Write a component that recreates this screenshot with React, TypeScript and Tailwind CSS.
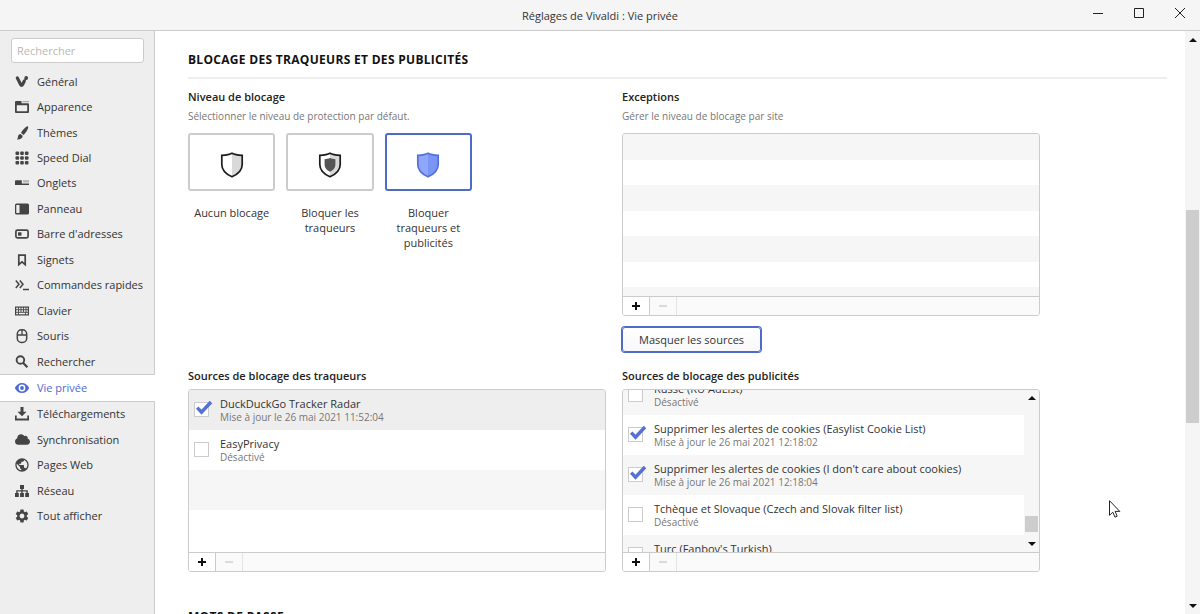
import { useState, type ReactNode } from "react";
import clsx from "clsx";
import { FaCloud } from "react-icons/fa";
import { MdPublic, MdSettings } from "react-icons/md";

function Icon({ children }: { children: ReactNode }) {
  return (
    <svg width="16" height="16" viewBox="0 0 16 16" fill="currentColor" aria-hidden="true">
      {children}
    </svg>
  );
}

const navItems: { label: string; icon: ReactNode }[] = [
  {
    label: "Général",
    icon: (
      <Icon>
        <path d="M3.300 3.900 6.500 10.200Q7.600 12.400 8.700 10.200L10.200 7.200" fill="none" stroke="currentColor" strokeWidth="3.200" strokeLinecap="round" />
        <circle cx="12.200" cy="4" r="1.900" />
        <path d="m10.200 7.600 2-4" stroke="currentColor" strokeWidth="1.600" />
      </Icon>
    ),
  },
  {
    label: "Apparence",
    icon: (
      <Icon>
        <path d="M1 3a1 1 0 0 1 1-1h5.500v2.200H14a1 1 0 0 1 1 1V13a1 1 0 0 1-1 1H2a1 1 0 0 1-1-1zm1.800 3.300v6h10.400v-6z" fillRule="evenodd" />
        <path d="M8.500 2H15v1.200H8.500z" opacity=".4" />
      </Icon>
    ),
  },
  {
    label: "Thèmes",
    icon: (
      <Icon>
        <path d="M14 1.500c.8.9-.3 2.900-1.400 4.700-.9 1.500-2 2.900-3 3.800L7 8c.6-1.300 1.800-2.900 3.100-4.200C11.600 2.200 13.300.9 14 1.500z" />
        <path d="M6.300 8.900 8.700 10.800c0 2.300-2.200 3.900-5.900 3.700 1.300-.9.8-2.100 1.300-3.500.4-1.200 1.100-1.900 2.200-2.100z" />
      </Icon>
    ),
  },
  {
    label: "Speed Dial",
    icon: (
      <Icon>
        {[3.3, 8, 12.7].map((y) =>
          [3.3, 8, 12.7].map((x) => (
            <rect key={`${x}-${y}`} x={x - 1.8} y={y - 1.8} width="3.6" height="3.6" rx="1" />
          ))
        )}
      </Icon>
    ),
  },
  {
    label: "Onglets",
    icon: (
      <Icon>
        <path d="M1 6a.8.8 0 0 1 .8-.8h6V8.600H15V10H1z" />
        <path d="M9 5.200h6v2.200H9z" opacity=".35" />
      </Icon>
    ),
  },
  {
    label: "Panneau",
    icon: (
      <Icon>
        <path d="M2.500 2.500h11A1.500 1.500 0 0 1 15 4v8a1.500 1.500 0 0 1-1.500 1.500h-11A1.500 1.500 0 0 1 1 12V4a1.500 1.500 0 0 1 1.500-1.500zM2.300 3.900v8.200h3.200V3.900z" fillRule="evenodd" />
      </Icon>
    ),
  },
  {
    label: "Barre d'adresses",
    icon: (
      <Icon>
        <rect x="1.900" y="4.200" width="12.200" height="7.600" rx="1.500" fill="none" stroke="currentColor" strokeWidth="1.700" />
        <path d="M4 6.300h3.500v3.400H4z" />
      </Icon>
    ),
  },
  {
    label: "Signets",
    icon: (
      <Icon>
        <path d="M4.800 3.200h6.400v9.500L8 9.800l-3.200 2.900z" fill="none" stroke="currentColor" strokeWidth="1.700" />
      </Icon>
    ),
  },
  {
    label: "Commandes rapides",
    icon: (
      <Icon>
        <path d="M1.800 3.500 5 7.200 1.800 11M5.800 3.500 9 7.200 5.800 11M9 12.600h6" fill="none" stroke="currentColor" strokeWidth="1.500" />
      </Icon>
    ),
  },
  {
    label: "Clavier",
    icon: (
      <Icon>
        <rect x="1.600" y="4.100" width="12.800" height="7.800" fill="none" stroke="currentColor" strokeWidth="1.200" />
        <path d="M1.500 6.700h13M1.500 9.300h13M4.500 4v5.300M7 4v5.300M9.500 4v5.300M12 4v5.300M4.500 9.300V12M11.500 9.300V12" stroke="currentColor" strokeWidth=".9" />
      </Icon>
    ),
  },
  {
    label: "Souris",
    icon: (
      <Icon>
        <rect x="3.300" y="1.700" width="9.400" height="12.800" rx="4.300" fill="none" stroke="currentColor" strokeWidth="1.500" />
        <path d="M3.300 7h9.400M8 2v5" stroke="currentColor" strokeWidth="1.300" />
      </Icon>
    ),
  },
  {
    label: "Rechercher",
    icon: (
      <Icon>
        <circle cx="6.400" cy="6" r="3.800" fill="none" stroke="currentColor" strokeWidth="1.900" />
        <path d="m9 8.800 4.400 4.400" stroke="currentColor" strokeWidth="2.200" />
      </Icon>
    ),
  },
  {
    label: "Vie privée",
    icon: (
      <Icon>
        <path d="M8 3C4.800 3 2.200 5 .8 8c1.400 3 4 5 7.200 5s5.800-2 7.200-5C13.800 5 11.200 3 8 3zm0 1.600a3.400 3.400 0 1 1 0 6.800 3.400 3.400 0 0 1 0-6.800z" fillRule="evenodd" />
        <circle cx="8" cy="8" r="1.900" />
      </Icon>
    ),
  },
  {
    label: "Téléchargements",
    icon: (
      <Icon>
        <path d="M6.500 1h3v4.800h3L8 10.300 3.500 5.800h3z" />
        <path d="M1 9.500h1.700v3h10.600v-3H15v5H1z" />
      </Icon>
    ),
  },
  { label: "Synchronisation", icon: <FaCloud size={15} /> },
  { label: "Pages Web", icon: <MdPublic size={16} /> },
  {
    label: "Réseau",
    icon: (
      <Icon>
        <path d="M6 2h4v4H6zM1 10h3.800v4H1zM6.100 10h3.800v4H6.100zM11.200 10H15v4h-3.800z" />
        <path d="M8 5v6M2.900 11V7.900h10.200V11" fill="none" stroke="currentColor" strokeWidth="1.400" />
      </Icon>
    ),
  },
  { label: "Tout afficher", icon: <MdSettings size={16} /> },
];

const shieldPath = "M12 1.200C9 2.800 5.500 3.100 1.800 3.400v9.100c0 6 4.600 9.800 10.200 12.300 5.600-2.500 10.200-6.300 10.200-12.300V3.400C18.500 3.100 15 2.800 12 1.200z";
const shieldHalf = "M12 1.200C15 2.800 18.500 3.100 22.200 3.400v9.100c0 6-4.600 9.800-10.200 12.300z";

function Shield({ variant }: { variant: "none" | "trackers" | "all" }) {
  const blue = variant === "all";
  return (
    <svg width="24" height="26" viewBox="0 0 24 26" aria-hidden="true">
      <path d={shieldPath} fill={blue ? "#8ea6fb" : "#ffffff"} />
      <path d={shieldHalf} fill={blue ? "#7b95f6" : "#d9d9d9"} />
      {variant === "trackers" && (
        <path d="M12 6c-1.600.8-3.400 1-5.400 1.200v5.600c0 3.300 2.300 5.400 5.400 6.900 3.100-1.500 5.400-3.600 5.400-6.900V7.200C15.400 7 13.600 6.800 12 6z" fill="#555555" />
      )}
      <path d={shieldPath} fill="none" stroke={blue ? "#5470d8" : "#1c1c1c"} strokeWidth="1.700" />
    </svg>
  );
}

const levels = [
  { id: "none", label: "Aucun blocage" },
  { id: "trackers", label: "Bloquer les traqueurs" },
  { id: "all", label: "Bloquer traqueurs et publicités" },
] as const;

type Source = { name: string; status: string; enabled: boolean; selected?: boolean };

const trackerSources: Source[] = [
  { name: "DuckDuckGo Tracker Radar", status: "Mise à jour le 26 mai 2021 11:52:04", enabled: true, selected: true },
  { name: "EasyPrivacy", status: "Désactivé", enabled: false },
];

const adSources: Source[] = [
  { name: "Russe (RU AdList)", status: "Désactivé", enabled: false },
  { name: "Supprimer les alertes de cookies (Easylist Cookie List)", status: "Mise à jour le 26 mai 2021 12:18:02", enabled: true },
  { name: "Supprimer les alertes de cookies (I don't care about cookies)", status: "Mise à jour le 26 mai 2021 12:18:04", enabled: true },
  { name: "Tchèque et Slovaque (Czech and Slovak filter list)", status: "Désactivé", enabled: false },
  { name: "Turc (Fanboy's Turkish)", status: "Désactivé", enabled: false },
];

function SourceRow({ source }: { source: Source }) {
  const [checked, setChecked] = useState(source.enabled);
  return (
    <label className={clsx("flex h-10 shrink-0 items-start gap-[11px] pl-[5px]", source.selected ? "bg-[#eeeeee]" : "odd:bg-[#f6f6f6]")}>
      <span className="relative mt-3 size-[15px] shrink-0">
        <input
          type="checkbox"
          checked={checked}
          onChange={(e) => setChecked(e.target.checked)}
          className="block size-[15px] appearance-none border border-[#cccccc] bg-white"
        />
        {checked && (
          <svg className="pointer-events-none absolute -top-1 left-0 h-[18px] w-5" viewBox="0 0 20 18" aria-hidden="true">
            <path d="m3.200 9.600 4.300 4.600L17 4" fill="none" stroke="#5571d6" strokeWidth="3.400" />
          </svg>
        )}
      </span>
      <span className="flex flex-col pt-[7px]">
        <span className="text-[11px] leading-[14px] text-[#333333]">{source.name}</span>
        <span className="text-[10px] leading-3 text-[#777777]">{source.status}</span>
      </span>
    </label>
  );
}

function ListBox({ children }: { children: ReactNode }) {
  return (
    <div className="overflow-hidden rounded-[3px] border border-[#cccccc]">
      <div className="flex h-[162px] overflow-hidden">{children}</div>
      <div className="flex h-[19px] border-t border-[#cccccc] bg-[#fafafa]">
        <button type="button" aria-label="Ajouter" className="flex w-[27px] items-center justify-center border-r border-[#cccccc] bg-white">
          <svg width="8" height="8" viewBox="0 0 8 8" aria-hidden="true">
            <path d="M4 0v8M0 4h8" stroke="#111111" strokeWidth="2" />
          </svg>
        </button>
        <button type="button" aria-label="Supprimer" disabled className="flex w-[27px] items-center justify-center border-r border-[#e4e4e4]">
          <svg width="8" height="8" viewBox="0 0 8 8" aria-hidden="true">
            <path d="M0 4h8" stroke="#bbbbbb" strokeWidth="1" />
          </svg>
        </button>
      </div>
    </div>
  );
}

function Arrow({ down = false }: { down?: boolean }) {
  return (
    <svg width="8" height="4" viewBox="0 0 8 4" aria-hidden="true">
      <path d={down ? "M0 0h8L4 4z" : "M0 4h8L4 0z"} fill="#111111" />
    </svg>
  );
}

function SectionTitle({ children }: { children: ReactNode }) {
  return <h2 className="border-b-2 border-[#eeeeee] pb-[7px] text-[12px] leading-5 font-bold uppercase tracking-wide text-[#111111]">{children}</h2>;
}

function Label({ children }: { children: ReactNode }) {
  return <h3 className="text-[11px] leading-4 font-semibold text-[#222222]">{children}</h3>;
}

function Sidebar() {
  const [active, setActive] = useState("Vie privée");
  return (
    <aside className="flex w-[155px] shrink-0 flex-col border-r border-[#cccccc] bg-[#eeeeee] pt-[7px]">
      <input
        type="search"
        aria-label="Rechercher"
        placeholder="Rechercher"
        className="mr-2.5 mb-1.5 ml-[11px] h-[25px] rounded-[3px] border border-[#cccccc] bg-white px-[5px] text-[11px] placeholder:text-[#b8b8b8]"
      />
      <nav className="flex h-[460px] flex-col">
        {navItems.map(({ label, icon }) => (
          <a
            key={label}
            href="#"
            onClick={() => setActive(label)}
            className={clsx(
              "flex flex-1 items-center gap-[7px] pl-3.5 text-[11px] leading-4 whitespace-nowrap",
              label === active ? "-mr-px border-y border-[#cccccc] bg-white text-[#4f6bd2]" : "text-[#333333]"
            )}
          >
            <span className={clsx("flex w-4 justify-center", label !== active && "text-[#444444]")}>{icon}</span>
            {label}
          </a>
        ))}
      </nav>
    </aside>
  );
}

export default function App() {
  const [level, setLevel] = useState("all");

  return (
    <div className="flex h-screen flex-col overflow-hidden bg-white font-['Open_Sans','Noto_Sans',sans-serif]">
      <header className="grid h-[31px] shrink-0 grid-cols-[1fr_auto_1fr] items-center border-b border-[#cccccc] bg-[#f5f5f5]">
        <h1 className="col-start-2 pt-0.5 text-[11px] leading-4 text-[#333333]">Réglages de Vivaldi : Vie privée</h1>
        <div className="flex justify-end pb-1">
          <button type="button" aria-label="Réduire" className="flex h-6 w-[41px] items-center justify-center">
            <svg width="10" height="10" viewBox="0 0 10 10"><path d="M0 5.500h10" stroke="#222222" /></svg>
          </button>
          <button type="button" aria-label="Agrandir" className="flex h-6 w-[41px] items-center justify-center">
            <svg width="10" height="10" viewBox="0 0 10 10"><path d="M.5.5h9v9h-9z" fill="none" stroke="#222222" /></svg>
          </button>
          <button type="button" aria-label="Fermer" className="flex h-6 w-[41px] items-center justify-center">
            <svg width="10" height="10" viewBox="0 0 10 10"><path d="m0 0 10 10M10 0 0 10" stroke="#222222" /></svg>
          </button>
        </div>
      </header>

      <div className="flex min-h-0 flex-1">
        <Sidebar />

        <main className="min-w-0 flex-1 overflow-hidden pt-[19px] pr-[18px] pl-[33px]">
          <SectionTitle>Blocage des traqueurs et des publicités</SectionTitle>

          <div className="mt-2.5 grid max-w-[852px] grid-cols-2 gap-x-4">
            <section>
              <Label>Niveau de blocage</Label>
              <p className="mt-[3px] text-[10px] leading-4 text-[#777777]">Sélectionner le niveau de protection par défaut.</p>
              <div className="mt-[9px] grid w-[284px] grid-cols-3 gap-[11px]">
                {levels.map(({ id, label }) => (
                  <label key={id} className="flex flex-col gap-3.5 text-center text-[11px] leading-[15px] text-[#333333]">
                    <input type="radio" name="level" checked={level === id} onChange={() => setLevel(id)} className="sr-only" />
                    <span
                      className={clsx(
                        "flex h-[58px] items-center justify-center rounded-[3px] border-2 pt-1.5",
                        level === id ? "border-[#4f6bc8]" : "border-[#cccccc]"
                      )}
                    >
                      <Shield variant={id} />
                    </span>
                    <span className="px-1">{label}</span>
                  </label>
                ))}
              </div>
            </section>

            <section>
              <Label>Exceptions</Label>
              <p className="mt-[3px] mb-[9px] text-[10px] leading-4 text-[#777777]">Gérer le niveau de blocage par site</p>
              <ListBox>
                <div className="flex h-[179px] flex-1 flex-col">
                  {Array.from({ length: 7 }, (_, i) => (
                    <div key={i} className="flex-1 odd:bg-[#f6f6f6]" />
                  ))}
                </div>
              </ListBox>
              <button
                type="button"
                className="mt-[11px] h-[25px] rounded-[3px] border border-[#4f6bc8] bg-linear-to-b from-white to-[#f8f8fa] px-4 text-[11px] leading-4 text-[#333333] ring-1 ring-[#4f6bc8]"
              >
                Masquer les sources
              </button>
            </section>

            <section className="mt-4">
              <Label>Sources de blocage des traqueurs</Label>
              <div className="mt-[5px]">
                <ListBox>
                  <div className="flex flex-1 flex-col">
                    {trackerSources.map((source) => (
                      <SourceRow key={source.name} source={source} />
                    ))}
                    <div className="h-10 shrink-0 bg-[#f6f6f6]" />
                  </div>
                </ListBox>
              </div>
            </section>

            <section className="mt-4">
              <Label>Sources de blocage des publicités</Label>
              <div className="mt-[5px]">
                <ListBox>
                  <div className="-mt-[15px] flex flex-1 flex-col">
                    {adSources.map((source) => (
                      <SourceRow key={source.name} source={source} />
                    ))}
                  </div>
                  <div className="flex w-[15px] flex-col items-center justify-between bg-[#f6f6f6] pt-1.5 pb-1.5">
                    <Arrow />
                    <div className="mt-auto mb-2.5 h-4 w-[13px] bg-[#cdcdcd]" />
                    <Arrow down />
                  </div>
                </ListBox>
              </div>
            </section>
          </div>

          <div className="mt-[35px]">
            <SectionTitle>Mots de passe</SectionTitle>
          </div>
        </main>

        <div className="flex w-[15px] shrink-0 flex-col items-center bg-[#f5f5f5] pt-[7px] pb-1.5">
          <Arrow />
          <div className="mt-[168px] mb-auto h-[213px] w-[13px] bg-[#cdcdcd]" />
          <Arrow down />
        </div>
      </div>

      {/* Mouse pointer */}
      <svg className="pointer-events-none absolute top-[500px] left-[1109px]" width="12" height="19" viewBox="0 0 12 19" aria-hidden="true">
        <path d="M.5.700v14.600l3.300-3.100 2.200 5 2.200-1-2.100-4.800h4.700z" fill="#ffffff" stroke="#222222" />
      </svg>
    </div>
  );
}
